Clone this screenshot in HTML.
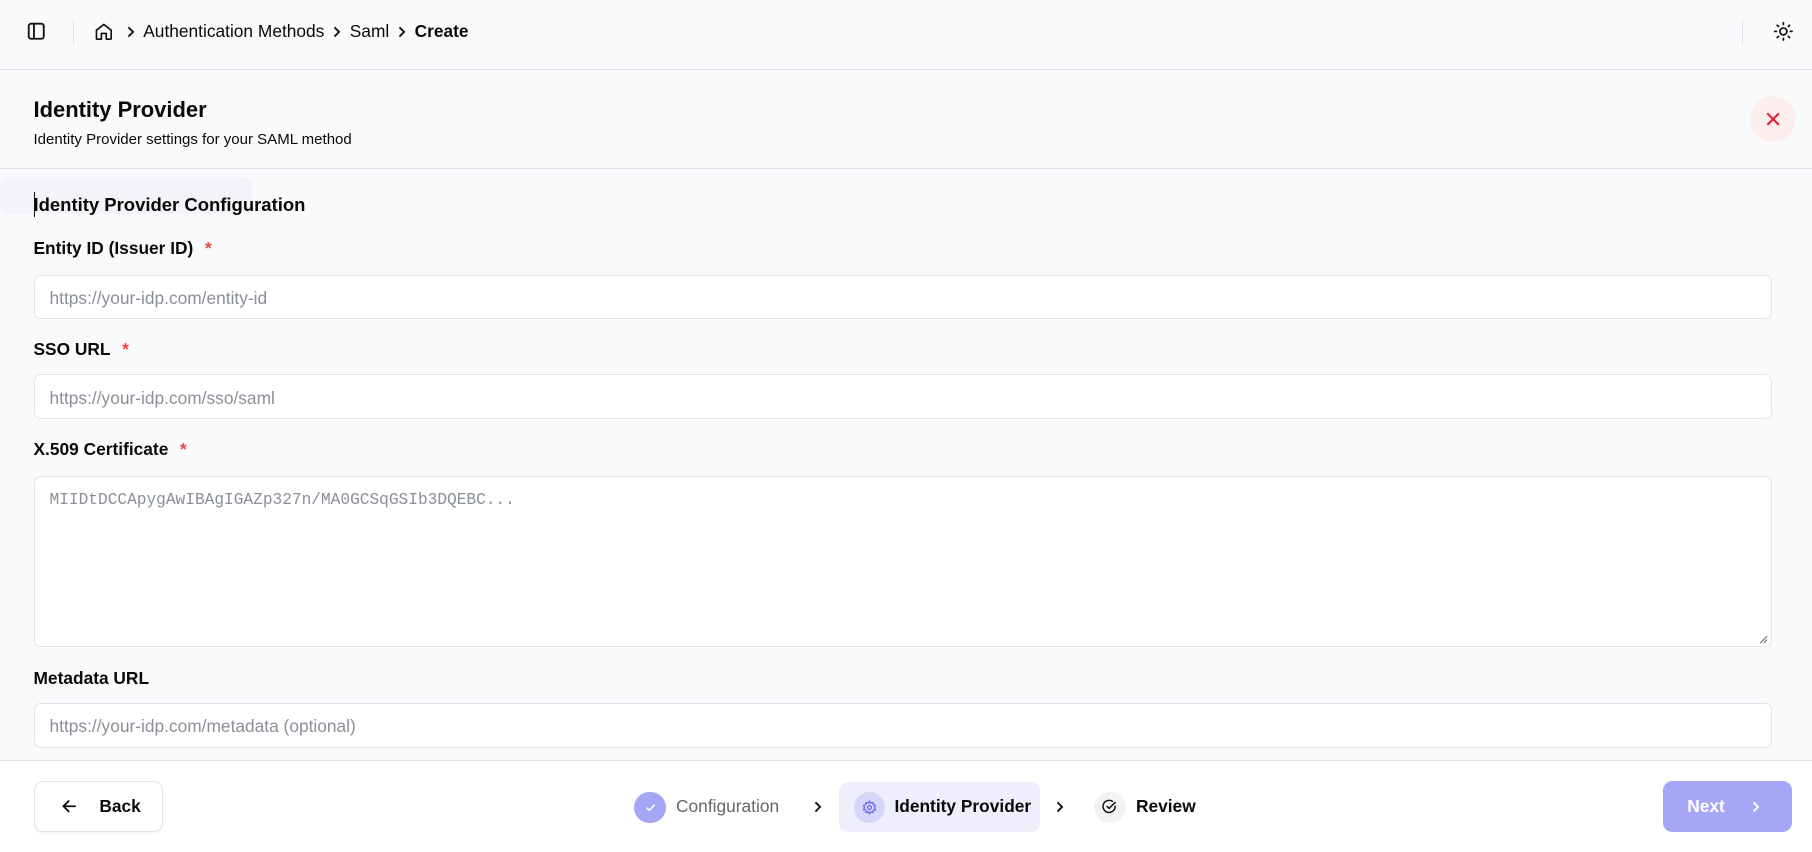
<!DOCTYPE html>
<html><head><meta charset="utf-8"><style>
html,body{margin:0;padding:0;width:1812px;height:852px;overflow:hidden;background:#f9fafc;}
#w{zoom:1.15561;width:1568px;height:737.3px;position:relative;font-family:"Liberation Sans",sans-serif;color:#0a0a0a;}
.a{position:absolute;}
.lbl{position:absolute;left:29px;font-size:15px;font-weight:bold;}
.lbl span{color:#ef4444;margin-left:10px;}
.in{position:absolute;left:29px;width:1504px;background:#fff;border:1px solid #e2e5ea;border-radius:6px;box-sizing:border-box;}
.ph{position:absolute;left:13px;font-size:15px;color:#8a8f98;}
.chev{display:inline-block;vertical-align:middle;margin:0 6px;}
</style></head><body><div id="w">
<div class="a" style="left:0;top:0;width:1568px;height:61px;border-bottom:1px solid #e1e3e8;box-sizing:border-box;"></div>
<svg class="a" style="left:23px;top:19px" width="16" height="16" viewBox="0 0 16 16" fill="none" stroke="#111" stroke-width="1.6"><rect x="1.5" y="1.5" width="13" height="13" rx="2"/><line x1="6" y1="1.5" x2="6" y2="14.5"/></svg>
<div class="a" style="left:63px;top:17px;width:1px;height:22px;background:#e1e3e8"></div>
<svg class="a" style="left:81px;top:19px" width="17" height="17" viewBox="0 0 24 24" fill="none" stroke="#111" stroke-width="2" stroke-linejoin="round"><path d="M3 10l9-7 9 7v10a1 1 0 0 1-1 1h-5v-7H9v7H4a1 1 0 0 1-1-1z"/></svg>
<div class="a" style="left:102px;top:17px;font-size:15px;line-height:20px;white-space:nowrap">
<svg class="chev" width="10" height="12" viewBox="0 0 10 12" fill="none" stroke="#111" stroke-width="1.6"><path d="M3 2l4 4-4 4"/></svg>Authentication Methods<svg class="chev" width="10" height="12" viewBox="0 0 10 12" fill="none" stroke="#111" stroke-width="1.6"><path d="M3 2l4 4-4 4"/></svg>Saml<svg class="chev" width="10" height="12" viewBox="0 0 10 12" fill="none" stroke="#111" stroke-width="1.6"><path d="M3 2l4 4-4 4"/></svg><b>Create</b></div>
<div class="a" style="left:1507px;top:17px;width:1px;height:22px;background:#e1e3e8"></div>
<svg class="a" style="left:1534px;top:18px" width="18" height="18" viewBox="0 0 24 24" fill="none" stroke="#111" stroke-width="2" stroke-linecap="round"><circle cx="12" cy="12" r="4"/><path d="M12 2v2M12 20v2M4.9 4.9l1.4 1.4M17.7 17.7l1.4 1.4M2 12h2M20 12h2M4.9 19.1l1.4-1.4M17.7 6.3l1.4-1.4"/></svg>
<div class="a" style="left:29px;top:84px;font-size:19px;font-weight:bold;">Identity Provider</div>
<div class="a" style="left:29px;top:113px;font-size:13px;">Identity Provider settings for your SAML method</div>
<div class="a" style="left:1514px;top:83px;width:40px;height:40px;border-radius:50%;background:#fdeeee"></div>
<svg class="a" style="left:1527px;top:96px" width="14" height="14" viewBox="0 0 14 14" stroke="#e11d2e" stroke-width="1.8"><path d="M2 2l10 10M12 2L2 12"/></svg>
<div class="a" style="left:0;top:145px;width:1568px;height:1px;background:#e1e3e8"></div>
<div class="a" style="left:0;top:153px;width:218px;height:32px;background:#f2f4f8;border-radius:6px"></div>
<div class="a" style="left:29px;top:166px;width:1px;height:22px;background:#111"></div>
<div class="a" style="left:29px;top:168px;font-size:16px;font-weight:bold;">Identity Provider Configuration</div>
<div class="lbl" style="top:206px">Entity ID (Issuer ID)<span>*</span></div>
<div class="in" style="top:238px;height:38px"><div class="ph" style="top:10px">https://your-idp.com/entity-id</div></div>
<div class="lbl" style="top:293px">SSO URL<span>*</span></div>
<div class="in" style="top:324px;height:39px"><div class="ph" style="top:11px">https://your-idp.com/sso/saml</div></div>
<div class="lbl" style="top:380px">X.509 Certificate<span>*</span></div>
<div class="in" style="top:412px;height:148px"><div class="ph" style="top:12px;font-family:'Liberation Mono',monospace;font-size:14px">MIIDtDCCApygAwIBAgIGAZp327n/MA0GCSqGSIb3DQEBC...</div>
<svg class="a" style="right:2px;bottom:2px" width="8" height="8" stroke="#777"><path d="M1 7L7 1M4 7L7 4"/></svg></div>
<div class="lbl" style="top:578px">Metadata URL</div>
<div class="in" style="top:608px;height:39px"><div class="ph" style="top:11px">https://your-idp.com/metadata (optional)</div></div>
<div class="a" style="left:0;top:658px;width:1568px;height:80px;background:#fff;border-top:1px solid #e1e3e8"></div>
<div class="a" style="left:29px;top:676px;width:112px;height:44px;border:1px solid #e1e3e8;border-radius:8px;box-sizing:border-box;background:#fff;box-shadow:0 1px 2px rgba(0,0,0,.05)"></div>
<svg class="a" style="left:52px;top:690px" width="16" height="16" viewBox="0 0 16 16" fill="none" stroke="#111" stroke-width="1.6" stroke-linecap="round"><path d="M13 8H3M7.5 3.5L3 8l4.5 4.5"/></svg>
<div class="a" style="left:86px;top:689px;font-size:15px;font-weight:bold">Back</div>
<div class="a" style="left:549px;top:685px;width:27px;height:27px;border-radius:50%;background:#a5a6f6"></div>
<svg class="a" style="left:556px;top:692px" width="13" height="13" viewBox="0 0 13 13" fill="none" stroke="#fff" stroke-width="1.3"><path d="M3 6.5l2.5 2.5L10 4"/></svg>
<div class="a" style="left:585px;top:689px;font-size:15px;color:#666">Configuration</div>
<svg class="a" style="left:703px;top:692px" width="10" height="12" viewBox="0 0 10 12" fill="none" stroke="#111" stroke-width="1.6"><path d="M3 2l4 4-4 4"/></svg>
<div class="a" style="left:726px;top:677px;width:174px;height:43px;border-radius:8px;background:#eeeefc"></div>
<div class="a" style="left:739px;top:685px;width:27px;height:27px;border-radius:50%;background:#d6d6f8"></div>
<svg class="a" style="left:746px;top:692px" width="13" height="13" viewBox="0 0 24 24" fill="none" stroke="#6366f1" stroke-width="2"><circle cx="12" cy="12" r="3"/><path d="M12 2l2 3 3.5-1 .5 3.5 3.5 1-1.5 3.5 1.5 3.5-3.5 1-.5 3.5-3.5-1-2 3-2-3-3.5 1-.5-3.5-3.5-1L4 12 2.5 8.5l3.5-1L6.5 4 10 5z"/></svg>
<div class="a" style="left:774px;top:689px;font-size:15px;font-weight:bold">Identity Provider</div>
<svg class="a" style="left:912px;top:692px" width="10" height="12" viewBox="0 0 10 12" fill="none" stroke="#111" stroke-width="1.6"><path d="M3 2l4 4-4 4"/></svg>
<div class="a" style="left:947px;top:685px;width:27px;height:27px;border-radius:50%;background:#f2f2f3"></div>
<svg class="a" style="left:953px;top:691px" width="14" height="14" viewBox="0 0 24 24" fill="none" stroke="#111" stroke-width="2.2" stroke-linecap="round"><path d="M21 11a9 9 0 1 1-4-7.5"/><path d="M9 11l3 3 9-9"/></svg>
<div class="a" style="left:983px;top:689px;font-size:15px;font-weight:bold">Review</div>
<div class="a" style="left:1439px;top:676px;width:112px;height:44px;border-radius:8px;background:#a5a6f6"></div>
<div class="a" style="left:1460px;top:689px;font-size:15px;font-weight:bold;color:#fff">Next</div>
<svg class="a" style="left:1514px;top:692px" width="10" height="12" viewBox="0 0 10 12" fill="none" stroke="#fff" stroke-width="1.6"><path d="M3 2l4 4-4 4"/></svg>
</div></body></html>
